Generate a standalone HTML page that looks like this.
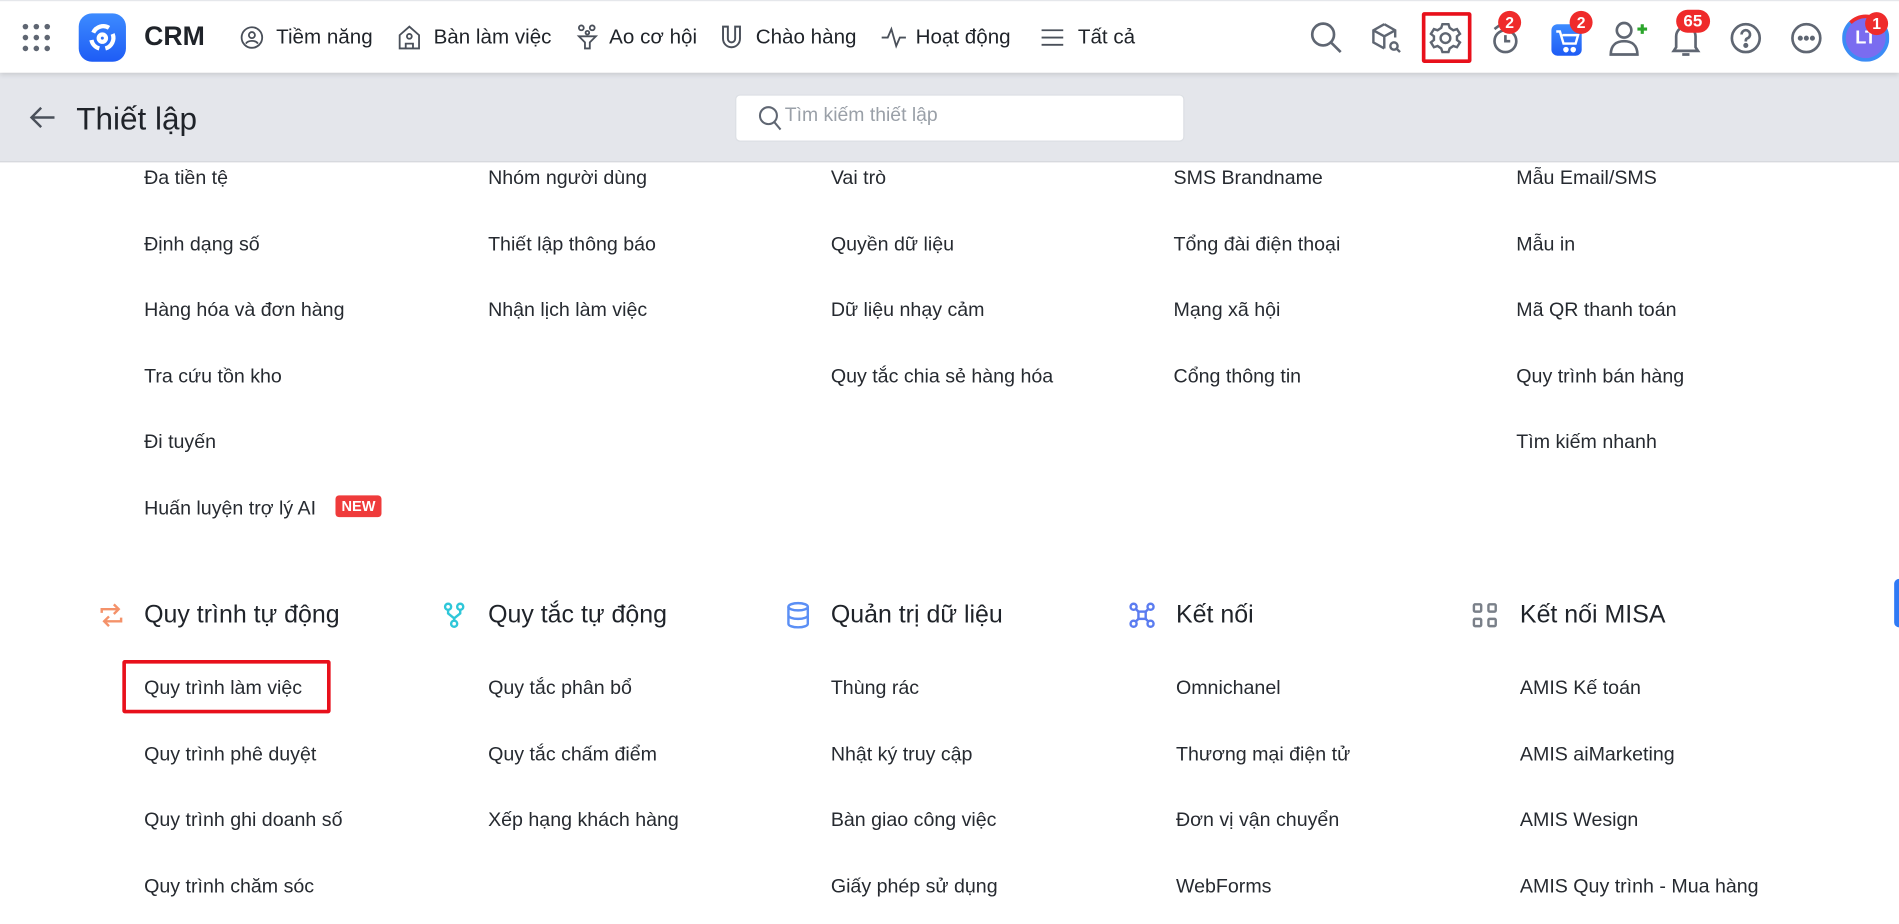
<!DOCTYPE html>
<html><head><meta charset="utf-8"><style>
*{margin:0;padding:0;box-sizing:border-box}
html,body{width:1899px;height:924px;overflow:hidden;background:#fff;font-family:"Liberation Sans","DejaVu Sans",sans-serif;color:#1f2329}
#s{position:absolute;left:0;top:0;width:1568px;height:763px;transform:scale(1.2111);transform-origin:0 0}
.a{position:absolute;white-space:nowrap}
.top{position:absolute;left:0;top:0;width:1568px;height:60px;background:#fff;box-shadow:0 2px 4px rgba(0,0,0,.12);z-index:2;border-top:1px solid #e5e7eb}
.band{position:absolute;left:0;top:60px;width:1568px;height:74px;background:#e4e6eb;border-bottom:1px solid #d6d8dd}
.nav{font-size:17px;color:#1f2329;top:20px}
.it{font-size:16.2px;color:#262a30;margin-top:2px}
.h{font-size:20.6px;color:#1f2329;top:496px}
svg.i{position:absolute}
.badge{position:absolute;background:#ef2b2b;color:#fff;font-weight:bold;font-size:13px;height:19px;line-height:19px;border-radius:10px;text-align:center;padding:0 5px;min-width:19px}
</style></head><body><div id="s">
<div class="top">
<svg class="i" style="left:18px;top:18px" width="24" height="24" fill="#5f6672"><circle cx="3" cy="3" r="2.3"/><circle cx="12" cy="3" r="2.3"/><circle cx="21" cy="3" r="2.3"/><circle cx="3" cy="12" r="2.3"/><circle cx="12" cy="12" r="2.3"/><circle cx="21" cy="12" r="2.3"/><circle cx="3" cy="21" r="2.3"/><circle cx="12" cy="21" r="2.3"/><circle cx="21" cy="21" r="2.3"/></svg>
<div class="a" style="left:65px;top:10px;width:39px;height:40px;border-radius:11px;background:linear-gradient(#3d8bff,#1e5cf5)"></div>
<svg class="i" style="left:72px;top:18px" width="25" height="25" fill="none" stroke="#fff" stroke-width="3.5"><path d="M5 8 A9 9 0 0 1 18 4"/><path d="M21 9 A9 9 0 0 1 15 21"/><path d="M10 21 A9 9 0 0 1 3.5 14"/><circle cx="12.5" cy="12.5" r="3"/></svg>
<div class="a" style="left:119px;top:16px;font-size:22px;font-weight:bold">CRM</div>
<svg class="i" style="left:198px;top:20px" width="20" height="20" fill="none" stroke="#4a505a" stroke-width="1.5"><circle cx="10" cy="10" r="8.5"/><circle cx="10" cy="8" r="2.5"/><path d="M5 15c2-3 8-3 10 0"/></svg>
<div class="a nav" style="left:228px">Tiềm năng</div>
<svg class="i" style="left:328px;top:19px" width="20" height="22" fill="none" stroke="#4a505a" stroke-width="1.5"><path d="M2 9l8-7 8 7v11H2z"/><circle cx="10" cy="10" r="2"/><path d="M7 20v-4h6v4"/></svg>
<div class="a nav" style="left:358px">Bàn làm việc</div>
<svg class="i" style="left:476px;top:19px" width="18" height="22" fill="none" stroke="#4a505a" stroke-width="1.5"><circle cx="4" cy="3" r="2"/><circle cx="13" cy="3" r="2"/><circle cx="9" cy="7" r="1.5"/><path d="M2 10h14l-5 5v5h-4v-5z"/></svg>
<div class="a nav" style="left:503px">Ao cơ hội</div>
<svg class="i" style="left:594px;top:19px" width="20" height="22" fill="none" stroke="#4a505a" stroke-width="1.6"><path d="M3 2v10a7 7 0 0 0 14 0V2h-4v10a3 3 0 0 1-6 0V2z"/></svg>
<div class="a nav" style="left:624px">Chào hàng</div>
<svg class="i" style="left:727px;top:20px" width="22" height="20" fill="none" stroke="#4a505a" stroke-width="1.5"><path d="M1 10h5l3-7 4 14 3-7h5"/></svg>
<div class="a nav" style="left:756px">Hoạt động</div>
<svg class="i" style="left:860px;top:22px" width="18" height="16" fill="none" stroke="#4a505a" stroke-width="1.5"><path d="M0 2h18M0 8h18M0 14h18"/></svg>
<div class="a nav" style="left:890px">Tất cả</div>

<svg class="i" style="left:1081px;top:16px" width="28" height="28" fill="none" stroke="#5f6672" stroke-width="2.2"><circle cx="11.5" cy="11.5" r="9"/><path d="M18 18l8 8"/></svg>
<svg class="i" style="left:1131px;top:17px" width="28" height="28" fill="none" stroke="#5f6672" stroke-width="2"><path d="M12 2l9 5v6M12 2L3 7v10l9 5M3 7l9 5 9-5M12 12v10"/><circle cx="20" cy="20" r="3"/><path d="M22 22l3 3"/></svg>
<div class="a" style="left:1174px;top:9px;width:41px;height:42px;border:3px solid #e8101b;border-radius:2px"></div>
<svg class="i" style="left:1180px;top:17px" width="27" height="27" fill="none" stroke="#5f6672" stroke-width="2"><path d="M11 2h5l1 3 3 2 3-1 2.5 4-2.5 2v3l2.5 2-2.5 4-3-1-3 2-1 3h-5l-1-3-3-2-3 1-2.5-4 2.5-2v-3L1.5 10 4 6l3 1 3-2z"/><circle cx="13.5" cy="13.5" r="4"/></svg>
<svg class="i" style="left:1230px;top:17px" width="26" height="28" fill="none" stroke="#5f6672" stroke-width="2.2"><circle cx="13" cy="16" r="9"/><path d="M13 11v5h4M4 6l4-3"/></svg>
<div class="badge" style="left:1237px;top:8px">2</div>
<div class="a" style="left:1281px;top:19px;width:25px;height:26px;border-radius:5px;background:linear-gradient(#3d8bff,#1e5cf5)"></div>
<svg class="i" style="left:1283px;top:22px" width="22" height="22" fill="none" stroke="#fff" stroke-width="2"><path d="M2 3h3l3 10h10l2-7H7"/><circle cx="10" cy="18" r="1.3" fill="#fff"/><circle cx="16" cy="18" r="1.3" fill="#fff"/></svg>
<div class="badge" style="left:1296px;top:8px">2</div>
<svg class="i" style="left:1328px;top:16px" width="34" height="30" fill="none" stroke="#5f6672" stroke-width="2.2"><circle cx="13" cy="8" r="6"/><path d="M2 28c0-8 5-11 11-11s11 3 11 11z"/><path d="M28 3v8M24 7h8" stroke="#2ba52b" stroke-width="2.6"/></svg>
<svg class="i" style="left:1379px;top:16px" width="26" height="32" fill="none" stroke="#5f6672" stroke-width="2.2"><path d="M5 22V13a8 8 0 0 1 16 0v9l2 3H3z"/><path d="M10 28h6"/></svg>
<div class="badge" style="left:1384px;top:7px;font-size:14px;padding:0 6px">65</div>
<svg class="i" style="left:1428px;top:17px" width="27" height="27" fill="none" stroke="#5f6672" stroke-width="2.2"><circle cx="13.5" cy="13.5" r="11.5"/><path d="M10 10.5a3.5 3.5 0 1 1 4.5 3.3c-1 .4-1 1.2-1 2.5"/><circle cx="13.5" cy="19.5" r="1" fill="#5f6672"/></svg>
<svg class="i" style="left:1478px;top:17px" width="27" height="27" fill="none" stroke="#5f6672" stroke-width="2.2"><circle cx="13.5" cy="13.5" r="11.5"/><circle cx="8.5" cy="13.5" r="1" fill="#5f6672"/><circle cx="13.5" cy="13.5" r="1" fill="#5f6672"/><circle cx="18.5" cy="13.5" r="1" fill="#5f6672"/></svg>
<div class="a" style="left:1521px;top:11px;width:39px;height:39px;border-radius:50%;border:3px solid #3b8cf5;border-top-color:#ef2b2b;background:#7a6cf0;color:#fff;font-weight:bold;font-size:15px;line-height:33px;text-align:center">LT</div>
<div class="badge" style="left:1540px;top:9px">1</div>
</div>

<div class="band">
<svg class="i" style="left:24px;top:27px" width="22" height="20" fill="none" stroke="#4a505a" stroke-width="2"><path d="M21 10H2M10 2l-8 8 8 8"/></svg>
<div class="a" style="left:63px;top:23px;font-size:26px;color:#1f2329">Thiết lập</div>
<div class="a" style="left:607px;top:18px;width:371px;height:39px;background:#fff;border-radius:4px;border:1px solid #dcdfe4"></div>
<svg class="i" style="left:626px;top:27px" width="20" height="22" fill="none" stroke="#5f6672" stroke-width="1.7"><circle cx="8.5" cy="8.5" r="7"/><path d="M13.5 14l5 6"/></svg>
<div class="a" style="left:648px;top:27px;font-size:16px;color:#9aa0a8">Tìm kiếm thiết lập</div>
</div>

<div class="a it" style="left:119px;top:136px">Đa tiền tệ</div>
<div class="a it" style="left:119px;top:191px">Định dạng số</div>
<div class="a it" style="left:119px;top:245px">Hàng hóa và đơn hàng</div>
<div class="a it" style="left:119px;top:300px">Tra cứu tồn kho</div>
<div class="a it" style="left:119px;top:354px">Đi tuyến</div>
<div class="a it" style="left:119px;top:409px">Huấn luyện trợ lý AI</div>
<div class="a" style="left:277px;top:409px;background:#ef3b3b;color:#fff;font-size:12px;font-weight:bold;padding:2px 5px;border-radius:3px">NEW</div>
<div class="a it" style="left:403px;top:136px">Nhóm người dùng</div>
<div class="a it" style="left:403px;top:191px">Thiết lập thông báo</div>
<div class="a it" style="left:403px;top:245px">Nhận lịch làm việc</div>
<div class="a it" style="left:686px;top:136px">Vai trò</div>
<div class="a it" style="left:686px;top:191px">Quyền dữ liệu</div>
<div class="a it" style="left:686px;top:245px">Dữ liệu nhạy cảm</div>
<div class="a it" style="left:686px;top:300px">Quy tắc chia sẻ hàng hóa</div>
<div class="a it" style="left:969px;top:136px">SMS Brandname</div>
<div class="a it" style="left:969px;top:191px">Tổng đài điện thoại</div>
<div class="a it" style="left:969px;top:245px">Mạng xã hội</div>
<div class="a it" style="left:969px;top:300px">Cổng thông tin</div>
<div class="a it" style="left:1252px;top:136px">Mẫu Email/SMS</div>
<div class="a it" style="left:1252px;top:191px">Mẫu in</div>
<div class="a it" style="left:1252px;top:245px">Mã QR thanh toán</div>
<div class="a it" style="left:1252px;top:300px">Quy trình bán hàng</div>
<div class="a it" style="left:1252px;top:354px">Tìm kiếm nhanh</div>

<svg class="i" style="left:82px;top:497px" width="20" height="22" fill="none" stroke="#f4926a" stroke-width="2"><path d="M2 9V6h14M12 2l4 4-4 4M18 13v3H4M8 20l-4-4 4-4"/></svg>
<div class="a h" style="left:119px">Quy trình tự động</div>
<svg class="i" style="left:366px;top:497px" width="18" height="22" fill="none" stroke="#2fc7d9" stroke-width="2"><circle cx="4" cy="4" r="2.5"/><circle cx="14" cy="4" r="2.5"/><circle cx="9" cy="18" r="2.5"/><path d="M4 6.5v3l5 4 5-4v-3M9 13.5v2"/></svg>
<div class="a h" style="left:403px">Quy tắc tự động</div>
<svg class="i" style="left:649px;top:496px" width="20" height="24" fill="none" stroke="#5b8ff5" stroke-width="2"><ellipse cx="10" cy="5" rx="8" ry="3"/><path d="M2 5v14c0 1.7 3.6 3 8 3s8-1.3 8-3V5M2 12c0 1.7 3.6 3 8 3s8-1.3 8-3"/></svg>
<div class="a h" style="left:686px">Quản trị dữ liệu</div>
<svg class="i" style="left:932px;top:497px" width="22" height="22" fill="none" stroke="#5b7cf0" stroke-width="2"><circle cx="4" cy="4" r="2.5"/><circle cx="18" cy="4" r="2.5"/><circle cx="4" cy="18" r="2.5"/><circle cx="18" cy="18" r="2.5"/><rect x="8" y="8" width="6" height="6"/><path d="M6 6l2 2M16 6l-2 2M6 16l2-2M16 16l-2-2"/></svg>
<div class="a h" style="left:971px">Kết nối</div>
<svg class="i" style="left:1215px;top:497px" width="22" height="22" fill="none" stroke="#7a8089" stroke-width="2"><rect x="2" y="2" width="6" height="6" rx="1"/><rect x="14" y="2" width="6" height="6" rx="1"/><rect x="2" y="14" width="6" height="6" rx="1"/><rect x="14" y="14" width="6" height="6" rx="1"/></svg>
<div class="a h" style="left:1255px">Kết nối MISA</div>

<div class="a" style="left:101px;top:545px;width:172px;height:44px;border:3px solid #e8101b;border-radius:2px"></div>
<div class="a it" style="left:119px;top:557px">Quy trình làm việc</div>
<div class="a it" style="left:119px;top:612px">Quy trình phê duyệt</div>
<div class="a it" style="left:119px;top:666px">Quy trình ghi doanh số</div>
<div class="a it" style="left:119px;top:721px">Quy trình chăm sóc</div>
<div class="a it" style="left:403px;top:557px">Quy tắc phân bổ</div>
<div class="a it" style="left:403px;top:612px">Quy tắc chấm điểm</div>
<div class="a it" style="left:403px;top:666px">Xếp hạng khách hàng</div>
<div class="a it" style="left:686px;top:557px">Thùng rác</div>
<div class="a it" style="left:686px;top:612px">Nhật ký truy cập</div>
<div class="a it" style="left:686px;top:666px">Bàn giao công việc</div>
<div class="a it" style="left:686px;top:721px">Giấy phép sử dụng</div>
<div class="a it" style="left:971px;top:557px">Omnichanel</div>
<div class="a it" style="left:971px;top:612px">Thương mại điện tử</div>
<div class="a it" style="left:971px;top:666px">Đơn vị vận chuyển</div>
<div class="a it" style="left:971px;top:721px">WebForms</div>
<div class="a it" style="left:1255px;top:557px">AMIS Kế toán</div>
<div class="a it" style="left:1255px;top:612px">AMIS aiMarketing</div>
<div class="a it" style="left:1255px;top:666px">AMIS Wesign</div>
<div class="a it" style="left:1255px;top:721px">AMIS Quy trình - Mua hàng</div>

<div class="a" style="left:1564px;top:478px;width:6px;height:40px;background:#2f7af5;border-radius:4px 0 0 4px"></div>
</div></body></html>
